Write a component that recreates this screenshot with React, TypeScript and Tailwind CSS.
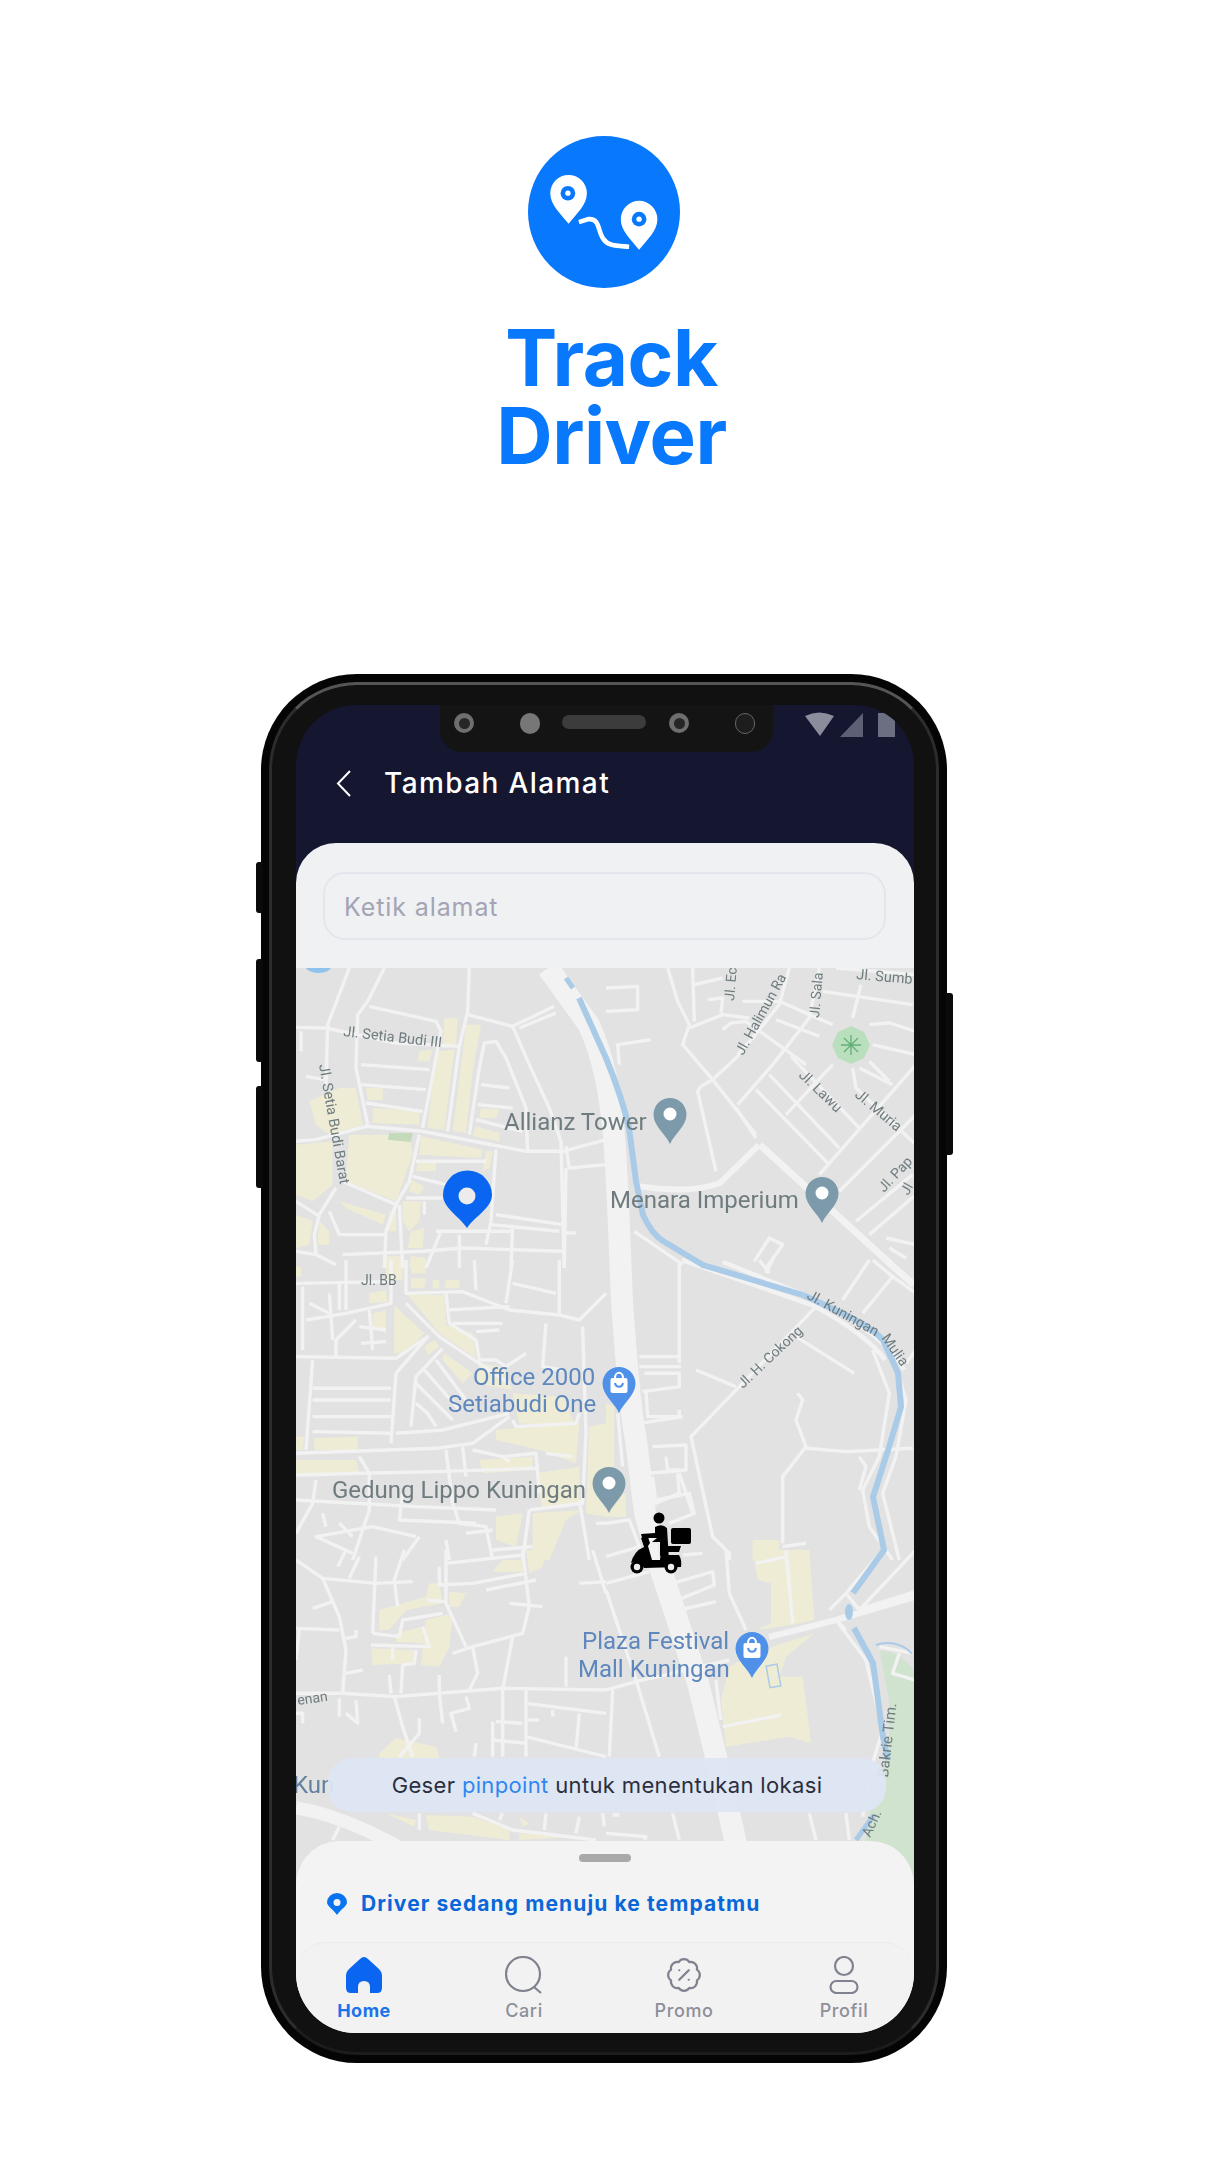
import type { ReactNode } from 'react';
import { BadgePercent } from 'lucide-react';

// map is traced in six tiles, each one is 310x300 on the page and written at 3x
type Tile = {
    x: number;
    y: number;
    roads: string[];
    yellow: string[];
};

const tiles: Tile[] = [
    {
        x: 296,
        y: 968,
        roads: [
            'M265 0 L215 100 L185 140 L180 300 L215 470',
            'M160 0 L95 170 L90 350',
            'M0 178 L90 180 L300 225 L490 235',
            'M220 115 L420 160 L435 190 L380 480',
            'M520 0 L515 130 L490 235 L455 490',
            'M515 140 L650 175 L775 115',
            'M670 180 L780 135',
            'M650 175 L700 290 L760 420 L795 520 L805 900',
            'M195 290 L400 305', 'M195 350 L390 365', 'M210 405 L380 430',
            'M0 520 L60 515 L210 475 L380 490 L560 525 L690 550 L800 550 L930 515',
            'M520 500 L550 300 L565 225 L600 220 L630 270 L690 420 L695 550',
            'M555 350 L640 360', 'M545 410 L650 420', 'M540 455 L680 490',
            'M370 500 L340 640 L300 710 L270 790 L265 900',
            'M140 640 L300 710',
            'M360 580 L570 580', 'M350 625 L450 650',
            'M600 545 L585 760 L570 830',
            'M600 740 L800 770', 'M585 770 L790 790',
            'M420 790 L650 790', 'M650 770 L645 900',
            'M435 790 L390 900', 'M490 800 L490 900',
            'M310 710 L320 900',
            'M330 690 L440 690', 'M385 700 L385 740',
            'M120 660 L70 740 L55 800 L60 860',
            'M0 700 L70 745',
            'M100 730 L130 800 L270 800',
            'M0 850 L60 860 L120 890',
            'M140 860 L380 850 L500 840 L800 850',
            'M30 325 L85 335', 'M15 190 L15 250',
            'M810 535 L820 600 L930 590',
            'M810 600 L805 900', 'M800 795 L840 795',
        ],
        yellow: [
            'M445 150 L485 150 L480 235 L440 240 Z',
            'M420 250 L475 245 L445 485 L395 480 Z',
            'M370 250 L410 245 L400 280 L365 280 Z',
            'M510 170 L555 170 L530 310 L510 495 L470 490 Z',
            'M40 400 L130 360 L180 360 L200 470 L100 500 L60 470 Z',
            'M160 500 L340 500 L350 560 L300 700 L150 640 Z',
            'M0 530 L110 520 L110 650 L50 700 L0 680 Z',
            'M130 700 L270 740 L260 770 L150 720 Z',
            'M210 360 L260 360 L260 395 L215 395 Z',
            'M230 420 L370 430 L370 470 L230 465 Z',
            'M375 505 L560 545 L555 570 L370 560 Z',
            'M365 585 L420 585 L420 610 L360 610 Z',
            'M555 420 L610 425 L600 450 L550 450 Z',
            'M540 475 L610 495 L610 520 L530 505 Z',
            'M345 635 L385 655 L370 680 L340 670 Z',
            'M320 700 L375 700 L370 760 L340 790 L320 760 Z',
            'M345 790 L385 780 L380 840 L335 840 Z',
            'M570 550 L590 550 L580 600 L560 610 Z',
            'M0 740 L50 760 L40 830 L0 840 Z',
            'M70 760 L100 790 L100 830 L65 830 Z',
            'M270 865 L320 865 L320 900 L270 900 Z',
            'M345 865 L390 870 L380 900 L340 900 Z',
            'M280 730 L300 730 L300 790 L275 790 Z',
        ],
    },
    {
        x: 296,
        y: 1260,
        roads: [
            'M0 70 L280 65', 'M150 0 L150 150',
            'M285 0 L285 130 L150 160 L30 180',
            'M330 0 L330 100 L500 95 L640 150 L790 165 L850 180 L930 100',
            'M330 130 L430 230 L550 310 L640 370',
            'M450 100 L460 190 L540 240 L550 300 L600 300 L630 320',
            'M450 150 L640 140', 'M470 190 L620 190', 'M540 215 L610 210',
            'M0 290 L300 295 L395 230 L300 340 L285 550',
            'M440 265 L360 350 L345 500',
            'M360 370 L470 480', 'M385 330 L490 450', 'M420 300 L510 420',
            'M360 430 L395 460 L420 500',
            'M50 300 L30 570',
            'M50 385 L285 385', 'M50 420 L285 420', 'M50 470 L285 470', 'M50 515 L285 520',
            'M0 580 L420 565 L530 550 L640 470',
            'M300 520 L440 510 L640 460',
            'M630 320 L690 280',
            'M130 70 L130 150', 'M20 80 L20 270', 'M100 100 L110 240', 'M220 150 L230 270',
            'M120 290 L120 240 L180 180', 'M40 130 L100 160', 'M190 200 L270 210', 'M195 250 L270 245',
            'M450 570 L470 730', 'M500 560 L510 650',
            'M530 570 L620 590 L720 580 L730 700', 'M620 590 L640 605', 'M750 580 L830 590',
            'M0 645 L200 640 L420 635 L720 625',
            'M190 590 L220 640 L220 750 L170 900',
            'M60 660 L50 730 L0 820',
            'M0 720 L360 740 L600 750',
            'M700 750 L860 730 L870 520 L860 200',
            'M750 190 L740 320 L800 330',
            'M650 480 L660 500 L840 490 L850 460',
            'M790 0 L790 160', 'M650 0 L630 130', 'M650 70 L780 100', 'M535 0 L540 90',
            'M320 700 L310 780 L540 790',
            'M470 730 L490 790 L570 800 L590 900',
            'M360 830 L230 800 L60 830 L170 880',
            'M370 830 L320 900', 'M450 840 L460 900', 'M510 820 L590 810',
            'M80 760 L90 800', 'M130 790 L170 830',
            'M700 750 L680 900', 'M710 860 L590 870',
            'M850 720 L880 900', 'M900 790 L930 790',
        ],
        yellow: [
            'M0 20 L15 20 L15 50 L0 50 Z',
            'M270 0 L320 0 L320 60 L270 60 Z',
            'M345 0 L390 0 L390 40 L345 40 Z',
            'M345 55 L390 55 L385 85 L345 85 Z',
            'M410 60 L430 60 L430 85 L410 85 Z',
            'M450 60 L490 60 L490 85 L445 85 Z',
            'M220 100 L270 90 L275 125 L220 130 Z',
            'M230 160 L270 150 L270 220 L230 200 Z',
            'M295 135 L320 160 L385 220 L330 280 L295 280 Z',
            'M335 105 L445 105 L450 195 L530 220 L540 295 L430 220 Z',
            'M385 260 L415 240 L430 260 L395 285 Z',
            'M445 280 L530 340 L500 370 L440 300 Z',
            'M550 310 L620 320 L650 390 L540 370 Z',
            'M650 400 L800 410 L840 500 L670 490 Z',
            'M600 510 L850 490 L840 610 L730 570 L600 540 Z',
            'M550 600 L710 590 L710 630 L560 640 Z',
            'M0 530 L25 530 L20 570 L0 570 Z',
            'M55 535 L185 530 L185 570 L55 570 Z',
            'M0 600 L180 600 L190 640 L0 640 Z',
            'M720 640 L850 620 L850 730 L740 745 Z',
            'M710 760 L860 750 L810 780 L760 900 L710 900 Z',
            'M600 770 L680 760 L660 860 L600 840 Z',
            'M880 500 L930 490 L930 770 L870 760 Z',
        ],
    },
    {
        x: 296,
        y: 1550,
        roads: [
            'M0 30 L80 85 L130 200 L150 300 L140 430',
            'M80 85 L240 100 L350 95',
            'M190 20 L160 85', 'M240 20 L230 250', 'M325 0 L295 90 L305 170', 'M150 0 L125 50',
            'M50 175 L110 155', 'M0 235 L130 240', 'M10 240 L0 330',
            'M150 265 L180 260 L180 240', 'M150 370 L200 360',
            'M0 430 L140 430 L300 440 L620 415 L930 420',
            'M450 0 L450 160 L510 290',
            'M430 50 L430 105 L530 100 L690 70',
            'M450 40 L680 15',
            'M680 0 L700 170 L680 250 L530 290 L470 310',
            'M530 290 L545 370 L520 420',
            'M650 260 L620 420 L620 620',
            'M690 415 L690 620',
            'M570 120 L720 90', 'M640 160 L740 170', 'M395 150 L450 155',
            'M230 250 L310 260 L320 210 L440 190',
            'M225 285 L400 290 L380 230',
            'M290 290 L290 330',
            'M360 300 L355 340 L320 345 L315 430',
            'M280 375 L285 430',
            'M430 375 L430 430 L440 520',
            'M295 440 L320 530 L350 620',
            'M370 505 L370 550 L310 620',
            'M130 445 L130 500', 'M180 450 L185 520 L150 490', 'M0 490 L20 490 L20 520',
            'M510 440 L520 475 L465 490 L480 545',
            'M690 460 L930 490', 'M770 480 L770 500', 'M850 490 L840 600', 'M695 510 L730 510',
            'M690 560 L930 620', 'M600 515 L680 520', 'M590 515 L590 620', 'M590 570 L690 580',
            'M540 580 L535 620', 'M810 320 L810 410', 'M850 100 L930 95', 'M890 0 L930 130',
            'M370 790 L370 840', 'M530 790 L650 840 L900 870', 'M620 790 L610 810',
            'M750 790 L745 840', 'M850 800 L840 850', 'M920 790 L925 830', 'M130 830 L110 870',
        ],
        yellow: [
            'M620 30 L680 30 L680 65 L590 65 Z',
            'M690 0 L750 0 L740 50 L700 70 Z',
            'M400 100 L430 100 L440 160 L330 180 L280 240 L250 240 L250 180 L390 140 Z',
            'M460 125 L510 130 L490 170 L460 170 Z',
            'M390 210 L470 190 L460 290 L430 350 L375 345 Z',
            'M225 295 L355 300 L350 340 L230 345 Z',
            'M300 250 L380 230 L385 280 L300 275 Z',
            'M250 610 L300 565 L420 590 L430 625 L250 625 Z',
            'M270 790 L360 810 L355 830 Z',
            'M390 795 L530 800 L640 840 L640 870 L400 840 Z',
            'M670 800 L700 820 L680 830 Z',
            'M670 850 L850 860 L670 870 Z',
        ],
    },
    {
        x: 606,
        y: 968,
        roads: [
            'M0 60 L95 55 L95 125 L0 130',
            'M135 215 L35 230 L40 290',
            'M185 0 L215 100 L250 170 L230 230 L320 335 L450 500',
            'M250 180 L350 140 L430 150',
            'M260 0 L265 160', 'M265 50 L350 30', 'M305 95 L350 90 L345 135',
            'M320 335 L400 260',
            'M350 185 L375 165 L420 160 L600 290',
            'M410 100 L520 100 L680 170', 'M510 155 L640 205',
            'M640 0 L610 150 L500 290 L395 410',
            'M550 0 L520 110 L440 210 L395 260',
            'M450 365 L670 590', 'M490 320 L700 540', 'M555 265 L760 480',
            'M680 290 L540 440',
            'M640 620 L930 290', 'M700 670 L930 440', 'M750 760 L920 620', 'M790 800 L930 680',
            'M760 300 L860 350', 'M740 300 L750 360 L930 530',
            'M765 50 L740 150', 'M650 70 L920 110', 'M690 0 L930 20',
            'M790 170 L850 165 L930 190', 'M800 230 L930 260', 'M790 280 L850 340',
            'M285 355 L320 335', 'M285 355 L275 370 L330 610',
            'M390 420 L450 510',
            'M445 880 L490 810 L530 830 L480 900',
            'M85 790 L230 890',
            'M840 810 L930 830', 'M850 840 L900 870',
        ],
        yellow: [],
    },
    {
        x: 606,
        y: 1260,
        roads: [
            'M220 10 L220 310', 'M100 290 L225 290', 'M100 320 L225 320',
            'M770 690 L790 800 L860 900',
            'M800 270 L850 400 L820 590 L770 690',
            'M870 320 L900 420 L870 590 L830 700 L880 900',
            'M630 140 L400 380 L255 530 L320 830 L370 880 L370 900',
            'M270 330 L390 380', 'M570 230 L745 340',
            'M575 400 L590 420 L570 480 L600 560 L530 650 L530 850',
            'M600 565 L720 575 L920 565',
            'M115 340 L220 340 L220 380 L110 395',
            'M120 395 L125 470 L220 470 L220 450', 'M100 490 L230 470',
            'M140 560 L240 555 L240 630 L130 640', 'M180 590 L185 630 L225 630',
            'M140 650 L150 730 L220 700 L215 640', 'M150 720 L250 700 L265 760 L190 790', 'M220 640 L260 760',
            'M460 0 L490 40', 'M500 0 L480 40', 'M710 120 L790 0', 'M770 160 L860 50 L800 0', 'M860 50 L930 100',
            'M900 310 L930 270', 'M760 590 L780 620 L760 690', 'M530 860 L600 850',
            'M35 460 L50 620', 'M0 790 L70 780 L100 860 L0 890',
        ],
        yellow: [
            'M0 430 L25 440 L25 620 L0 640 Z',
            'M0 710 L60 700 L60 770 L0 770 Z',
            'M440 840 L520 840 L520 900 L440 900 Z',
            'M560 870 L610 870 L610 900 L560 900 Z',
        ],
    },
    {
        x: 606,
        y: 1550,
        roads: [
            'M360 0 L370 130 L420 240', 'M540 0 L560 220', 'M450 40 L540 20',
            'M0 100 L130 65', 'M230 15 L290 10',
            'M200 100 L320 65 L325 105 L215 150', 'M220 180 L330 155',
            'M0 120 L90 390 L160 620',
            'M0 420 L90 395 L370 330',
            'M690 210 L780 330 L830 540 L800 640 L770 800',
            'M670 180 L720 130 L830 0', 'M760 180 L930 0', 'M720 130 L760 180', 'M690 210 L720 240',
            'M330 390 L340 480 L345 510', 'M350 530 L525 495',
            'M20 420 L10 620',
            'M200 790 L220 870', 'M610 790 L630 870', 'M720 790 L730 870',
            'M0 850 L120 860 L115 870', 'M20 795 L40 795',
            'M880 310 L860 370 L925 390', 'M820 290 L920 310',
        ],
        yellow: [
            'M440 0 L610 0 L625 210 L555 225 L450 240 L495 220 L495 100 L455 90 Z',
            'M500 290 L625 250 L540 320 L520 380 L590 380 L615 580 L550 560 L360 590 L345 450 L370 350 L440 310 Z',
        ],
    },
];

type MapLabel = {
    text: string;
    x: number;
    y: number;
    size: number;
    angle?: number;
    color?: string;
};

const mapLabels: MapLabel[] = [
    { text: 'Jl. Setia Budi III', x: 343, y: 1036, size: 14.5, angle: 6.5 },
    { text: 'Jl. Setia Budi Barat', x: 319, y: 1065, size: 14.5, angle: 80 },
    { text: 'Jl. BB', x: 361, y: 1285, size: 14 },
    { text: 'Jl. Ec', x: 734, y: 1001, size: 14, angle: -85 },
    { text: 'Jl. Halimun Ra', x: 743, y: 1056, size: 14, angle: -61 },
    { text: 'Jl. Sala', x: 819, y: 1018, size: 14, angle: -85 },
    { text: 'Jl. Sumb', x: 856, y: 979, size: 14.5, angle: 5 },
    { text: 'Jl. Lawu', x: 798, y: 1076, size: 14.5, angle: 44 },
    { text: 'Jl. Muria', x: 854, y: 1096, size: 14.5, angle: 40 },
    { text: 'Jl. Pap', x: 884, y: 1193, size: 14, angle: -47 },
    { text: 'Jl', x: 908, y: 1196, size: 14, angle: -60 },
    { text: 'Jl. Kuningan', x: 806, y: 1298, size: 14.5, angle: 29 },
    { text: 'Mulia', x: 881, y: 1338, size: 14.5, angle: 55 },
    { text: 'Jl. H. Cokong', x: 743, y: 1389, size: 14, angle: -43.5 },
    { text: 'enan', x: 298, y: 1705, size: 14, angle: -8 },
    { text: 'Bakrie Tim.', x: 888, y: 1778, size: 15, angle: -83.5 },
    { text: 'Ach.', x: 870, y: 1838, size: 14, angle: -65 },
    { text: 'Kun', x: 293, y: 1793, size: 24, color: '#64809f' },
    { text: 'Allianz Tower', x: 504, y: 1130, size: 24 },
    { text: 'Menara Imperium', x: 610, y: 1208, size: 24 },
    { text: 'Gedung Lippo Kuningan', x: 332, y: 1498, size: 24 },
    { text: 'Office 2000', x: 473, y: 1385, size: 24, color: '#5d87bd' },
    { text: 'Setiabudi One', x: 448, y: 1412, size: 24, color: '#5d87bd' },
    { text: 'Plaza Festival', x: 582, y: 1649, size: 24, color: '#5d87bd' },
    { text: 'Mall Kuningan', x: 578, y: 1677, size: 24, color: '#5d87bd' },
];

function PlacePin({ x, y, color, shop }: { x: number; y: number; color: string; shop?: boolean }) {
    // x,y is the tip of a pin 33 wide and 46 tall
    return (
        <g transform={`translate(${x - 16.5} ${y - 46})`}>
            <path d="M16.5 46 C12 36 0 28 0 16.5 A16.5 16.5 0 0 1 33 16.5 C33 28 21 36 16.5 46 Z" fill={color} />
            {shop ? (
                <g>
                    <rect x="8" y="11" width="17" height="15" rx="2" fill="#fff" />
                    <path d="M12.5 11 C12.5 4 20.5 4 20.5 11" fill="none" stroke="#fff" strokeWidth="2" />
                    <path d="M12.5 16 C13.5 21 19.5 21 20.5 16" fill="none" stroke={color} strokeWidth="2" />
                </g>
            ) : (
                <circle cx="16.5" cy="16" r="6.5" fill="#fff" />
            )}
        </g>
    );
}

function CityMap() {
    return (
        <svg viewBox="296 968 618 917" className="absolute inset-0 h-[917px] w-[618px] blur-[0.7px]">
            <rect x="296" y="968" width="618" height="917" fill="#e2e2e2" />

            {tiles.map((tile) => (
                <g key={`y${tile.x}-${tile.y}`} transform={`translate(${tile.x} ${tile.y}) scale(0.3333)`}>
                    {tile.yellow.map((d) => (
                        <path key={d} d={d} fill="#efecd6" />
                    ))}
                </g>
            ))}

            <path d="M280 495 L350 495 L345 522 L275 515 Z" fill="#c4dbb9" transform="translate(296 968) scale(0.3333)" />
            <path d="M880 1651 C895 1650 905 1660 914 1670 L914 1885 L860 1885 L870 1810 L889 1750 L889 1700 Z" fill="#cfe3cf" />
            <polygon points="851,1026 864,1032 870,1045 864,1058 851,1064 838,1058 832,1045 838,1032" fill="#b9dfbc" />
            <path d="M851 1035 V1055 M841 1045 H861 M844 1038 L858 1052 M858 1038 L844 1052" stroke="#62b077" strokeWidth="1.3" />

            {tiles.map((tile) => (
                <g key={`r${tile.x}-${tile.y}`} transform={`translate(${tile.x} ${tile.y}) scale(0.3333)`}>
                    {tile.roads.map((d) => (
                        <path key={d} d={d} fill="none" stroke="#f2f2f2" strokeWidth="3.4" strokeLinejoin="round" vectorEffect="non-scaling-stroke" />
                    ))}
                </g>
            ))}

            {/* wider roads, page coordinates */}
            <g fill="none" stroke="#f2f2f2">
                <path d="M548 968 L589 1025 C605 1060 612 1100 615 1150 C619 1210 620 1260 622 1300 C626 1360 630 1410 636 1440 L645 1513 L661 1570 L698 1683 L716 1757 L733 1830 L745 1885" strokeWidth="22" />
                <path d="M296 1808 C340 1815 390 1840 420 1860" strokeWidth="13" />
                <path d="M760 1145 L895 1268 L914 1285" strokeWidth="7" />
                <path d="M759 1145 L720 1183 C700 1190 680 1192 636 1186" strokeWidth="6" />
                <path d="M682 1260 L812 1305 C850 1325 875 1345 885 1360" strokeWidth="4.5" />
                <path d="M723 1262 L812 1298 C860 1320 895 1350 904 1370" strokeWidth="4.5" />
                <path d="M769 1637 L836 1620 L914 1597" strokeWidth="6" />
                <path d="M860 1610 L914 1593" strokeWidth="5" />
            </g>

            {/* kali */}
            <g fill="none" stroke="#a9cbe8">
                <path d="M579 998 L606 1058 C615 1080 625 1110 629 1128 L636 1181 L643 1215 C650 1230 658 1238 663 1241 L703 1265 L803 1295" strokeWidth="6" />
                <path d="M803 1295 C840 1312 870 1325 883 1340 L898 1373 L901 1407 L889 1447 L873 1497 L884 1550 L853 1593" strokeWidth="6" />
                <path d="M854 1628 L873 1663 L883 1737 L888 1760" strokeWidth="6" />
                <path d="M566 978 L573 988" strokeWidth="5" />
                <path d="M876 1645 C890 1640 905 1645 912 1654" strokeWidth="2" />
                <path d="M874 1815 L856 1840" strokeWidth="5" />
                <ellipse cx="849" cy="1612" rx="4" ry="8" fill="#a9cbe8" strokeWidth="0" />
                <rect x="768" y="1665" width="11" height="22" strokeWidth="1.5" transform="rotate(-10 773 1676)" />
            </g>
            <ellipse cx="318.5" cy="966" rx="13" ry="7" fill="#8fc3ee" />

            {mapLabels.map((label) => (
                <text
                    key={label.text}
                    x={label.x}
                    y={label.y}
                    fontSize={label.size}
                    fill={label.color ?? '#6f7c7f'}
                    transform={label.angle ? `rotate(${label.angle} ${label.x} ${label.y})` : undefined}
                    className="font-['Roboto',sans-serif]"
                >
                    {label.text}
                </text>
            ))}

            <PlacePin x={670} y={1144} color="#7c9aaa" />
            <PlacePin x={822} y={1223} color="#7c9aaa" />
            <PlacePin x={609} y={1513} color="#7c9aaa" />
            <PlacePin x={619} y={1413} color="#4f91e8" shop />
            <PlacePin x={752} y={1678} color="#4f91e8" shop />

            {/* selected location */}
            <path d="M467 1228 C460 1217 443 1208 443 1195 A24.5 24.5 0 0 1 492 1195 C492 1208 474 1217 467 1228 Z" fill="#0a66f0" />
            <circle cx="467" cy="1196" r="8.5" fill="#ececec" />

            {/* driver on scooter */}
            <g fill="#000">
                <circle cx="659" cy="1518" r="5.5" />
                <rect x="671" y="1528" width="20" height="16" rx="2" />
                <path d="M655 1527 Q662 1523 667 1528 L669 1560 L660 1560 L660 1542 L652 1542 L657 1538 L642 1538 L641 1534 L655 1533 Z" />
                <path d="M662 1546 H681 L679 1552 H664 Z" />
                <path d="M641 1538 L648 1537 L650 1543 L648 1546 L652 1560 L662 1560 L662 1555 L679 1555 Q682 1560 681 1567 L644 1568 Q640 1559 631 1563 Q634 1551 644 1547 Z" />
                <circle cx="637" cy="1567" r="6.5" />
                <circle cx="671" cy="1567" r="6.5" />
            </g>
            <path d="M651 1543 L658 1543 L660 1558" fill="none" stroke="#e6e6e6" strokeWidth="1" />
            <circle cx="637" cy="1567" r="3.2" fill="#eee" />
            <circle cx="671" cy="1567" r="3.2" fill="#eee" />
        </svg>
    );
}

function NavItem({ label, active, children }: { label: string; active?: boolean; children: ReactNode }) {
    return (
        <div className="flex w-[120px] flex-col items-center">
            <div className="flex h-[38px] items-center justify-center">{children}</div>
            <span
                className={
                    active
                        ? 'mt-[5px] text-[18px] leading-[24px] font-bold tracking-[0.5px] text-[#1a73e8]'
                        : 'mt-[5px] text-[18px] leading-[24px] font-medium tracking-[0.6px] text-[#8d8f99]'
                }
            >
                {label}
            </span>
        </div>
    );
}

function AppLogo() {
    return (
        <svg viewBox="203 78 457 457" className="ml-[528px] h-[152px] w-[152px]">
            <circle cx="431.5" cy="306.5" r="228.5" fill="#0878fd" />
            <path d="M325 342 C300 310 270 285 270 250 A55 55 0 0 1 380 250 C380 285 350 310 325 342 Z" fill="#fff" />
            <circle cx="323" cy="250" r="22" fill="#0878fd" />
            <circle cx="323" cy="250" r="8" fill="#fff" />
            <path d="M537 420 C512 388 482 363 482 328 A55 55 0 0 1 592 328 C592 363 562 388 537 420 Z" fill="#fff" />
            <circle cx="537" cy="328" r="22" fill="#0878fd" />
            <circle cx="537" cy="328" r="8" fill="#fff" />
            <path d="M356 337 L385 328 C420 325 412 365 430 388 C445 410 470 408 507 411" fill="none" stroke="#fff" strokeWidth="14" />
        </svg>
    );
}

export default function App() {
    return (
        <div className="min-h-[2174px] bg-white pt-[136px] pb-[111px] font-['Inter',sans-serif]">
            <AppLogo />
            <h1 className="mt-[31px] text-center text-[78px] leading-[78px] font-bold tracking-[-0.5px] text-[#0878fd]">
                Track
                <br />
                Driver
            </h1>

            <div className="relative mt-[199px] ml-[261px] h-[1389px] w-[686px] rounded-[96px] bg-[#050505] p-[8px]">
                <div className="absolute top-[188px] -left-[5px] h-[51px] w-[7px] rounded-l-[3px] bg-[#0a0a0a]" />
                <div className="absolute top-[285px] -left-[5px] h-[103px] w-[7px] rounded-l-[3px] bg-[#0a0a0a]" />
                <div className="absolute top-[412px] -left-[5px] h-[102px] w-[7px] rounded-l-[3px] bg-[#0a0a0a]" />
                <div className="absolute top-[319px] -right-[6px] h-[162px] w-[7px] rounded-r-[3px] bg-[#0a0a0a]" />

                <div className="h-full rounded-[88px] border-[3px] border-[#2c2c2c] border-t-[#555] border-b-[#1c1c1c] bg-[#111] pt-[20px] pr-[22px] pb-[19px] pl-[24px]">
                    <div className="relative flex h-[1328px] w-[618px] flex-col overflow-hidden rounded-[60px] bg-[#14172f]">
                        <header className="relative h-[138px] shrink-0">
                            {/* notch */}
                            <div className="absolute top-0 left-[144px] flex h-[47px] w-[333px] items-start rounded-b-[22px] bg-[#141414] pt-[8px] pl-[14px]">
                                <span className="flex h-[20px] w-[20px] items-center justify-center rounded-full bg-[#6e6e6e]">
                                    <span className="h-[11px] w-[11px] rounded-full bg-[#262626]" />
                                </span>
                                <span className="ml-[46px] h-[21px] w-[20px] rounded-full bg-[#777]" />
                                <span className="mt-[2px] ml-[22px] h-[14px] w-[84px] rounded-full bg-[#3c3c3c]" />
                                <span className="ml-[23px] flex h-[20px] w-[20px] items-center justify-center rounded-full bg-[#6e6e6e]">
                                    <span className="h-[11px] w-[11px] rounded-full bg-[#262626]" />
                                </span>
                                <span className="ml-[46px] h-[21px] w-[20px] rounded-full border border-[#666] bg-[#1d1d1d]" />
                            </div>

                            {/* status bar */}
                            <svg viewBox="805 705 92 36" className="absolute top-0 left-[509px] h-[36px] w-[92px]">
                                <path d="M805 716 Q819 709 834 716 L820 736 Z" fill="#8b8d9c" />
                                <path d="M863 713 V737 H840 Z" fill="#5d6075" />
                                <path d="M878 713 H888 L895 720 V737 H878 Z" fill="#6c6f82" />
                            </svg>

                            <div className="flex h-[34px] translate-y-[61px] items-center pl-[40px]">
                                <svg viewBox="0 0 15 27" className="h-[27px] w-[15px]" fill="none" stroke="#fff" strokeWidth="2">
                                    <path d="M14 1 L2 13.5 L14 26" />
                                </svg>
                                <span className="ml-[33px] text-[28px] leading-[34px] font-medium tracking-[1.4px] text-white">
                                    Tambah Alamat
                                </span>
                            </div>
                        </header>

                        <div className="relative z-10 h-[125px] shrink-0 rounded-t-[40px] bg-[#f0f1f3] px-[27px] pt-[29px]">
                            <div className="flex h-[68px] w-[563px] items-center rounded-[22px] border-2 border-[#e3e6ec] pt-[3px] pl-[19px] text-[25px] tracking-[0.9px] text-[#a3a4b4]">
                                Ketik alamat
                            </div>
                        </div>

                        <div className="relative h-[917px] shrink-0">
                            <CityMap />
                            <div className="absolute top-[790px] left-[32px] flex h-[54px] w-[558px] items-center justify-center rounded-[24px] bg-[#dde6f3]/95 text-[22px] tracking-[0.35px] text-[#2b2e3d]">
                                Geser&nbsp;<span className="text-[#2f86f0]">pinpoint</span>&nbsp;untuk menentukan lokasi
                            </div>
                        </div>

                        <div className="relative z-10 -mt-[44px] h-[192px] shrink-0 rounded-t-[44px] bg-[#f3f3f3]">
                            <div className="mx-auto mt-[13px] h-[8px] w-[52px] rounded-full bg-[#a9a9a9]" />
                            <div className="mt-[30px] flex items-center pl-[31px]">
                                <svg viewBox="0 0 20 22" className="h-[22px] w-[20px]">
                                    <path d="M10 22 C7 17 0 13 0 9.5 A10 9.5 0 0 1 20 9.5 C20 13 13 17 10 22 Z" fill="#0a73f0" />
                                    <circle cx="10" cy="9.5" r="3.5" fill="#f3f3f3" />
                                </svg>
                                <span className="ml-[14px] text-[21px] leading-[24px] font-bold tracking-[1.1px] text-[#0a67d8]">
                                    Driver sedang menuju ke tempatmu
                                </span>
                            </div>

                            <nav className="absolute inset-x-0 top-[101px] flex h-[91px] gap-[40px] rounded-t-[30px] border-t border-[#ebebeb] bg-[#f2f2f2] pt-[13px] pl-[8px]">
                                <NavItem label="Home" active>
                                    <svg viewBox="0 0 36 36" className="h-[36px] w-[36px]">
                                        <path d="M18 0 Q20 0 22 2 L33 12 Q36 15 36 18 V31 Q36 36 31 36 H24 V30 Q24 24 18 24 Q12 24 12 30 V36 H5 Q0 36 0 31 V18 Q0 15 3 12 L14 2 Q16 0 18 0 Z" fill="#0a66f0" />
                                    </svg>
                                </NavItem>
                                <NavItem label="Cari">
                                    <svg viewBox="0 0 38 38" className="h-[38px] w-[38px]" fill="none" stroke="#80838f" strokeWidth="2.2">
                                        <circle cx="18" cy="18" r="17" />
                                        <path d="M29 31 L36 37" />
                                    </svg>
                                </NavItem>
                                <NavItem label="Promo">
                                    <BadgePercent className="h-[38px] w-[38px] text-[#80838f]" strokeWidth={1.4} />
                                </NavItem>
                                <NavItem label="Profil">
                                    <svg viewBox="0 0 30 38" className="h-[38px] w-[30px]" fill="none" stroke="#80838f" strokeWidth="2.2">
                                        <ellipse cx="15" cy="10" rx="9" ry="9" />
                                        <rect x="1.5" y="25" width="27" height="12" rx="6" />
                                    </svg>
                                </NavItem>
                            </nav>
                        </div>
                    </div>
                </div>
            </div>
        </div>
    );
}
